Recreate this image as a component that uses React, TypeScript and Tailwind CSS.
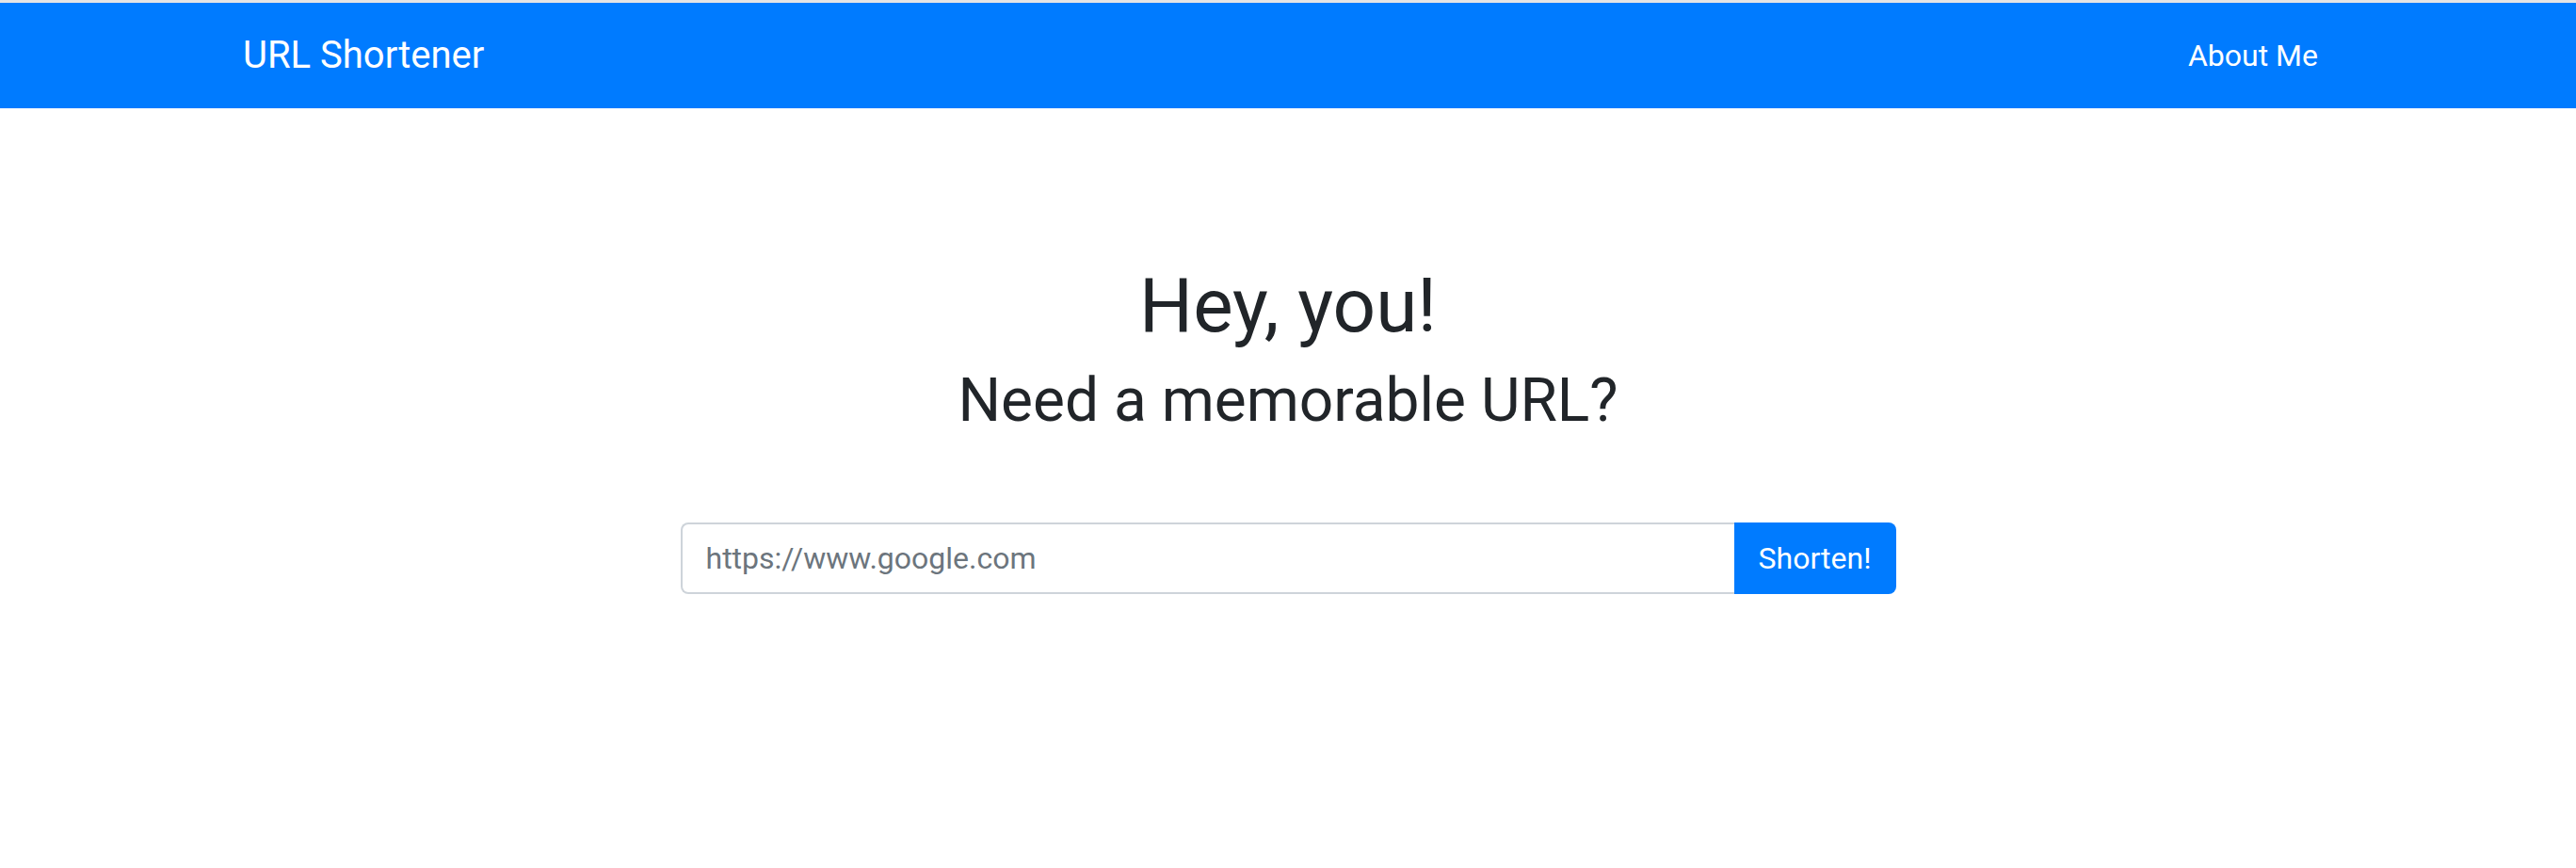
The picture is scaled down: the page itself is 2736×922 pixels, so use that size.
import React from "react";

export default function App() {
  return (
    <div className="min-h-[922px] bg-white" style={{ fontFamily: "Roboto, 'Liberation Sans', sans-serif" }}>
      <div className="h-[3px] bg-[#e4e4e4]" />
      <nav className="h-[112px] bg-[#007bff]">
        <div className="mx-auto flex h-full w-[2220px] items-center justify-between">
          <a className="text-[40px] leading-[60px] text-white">URL Shortener</a>
          <a className="px-4 text-[32px] leading-[48px] text-white">About Me</a>
        </div>
      </nav>
      <main className="flex flex-col items-center pt-[162px] text-[#212529]">
        <h1 className="text-[80px] leading-[96px] font-normal">Hey, you!</h1>
        <h2 className="mt-[14px] text-[64px] leading-[77px] font-normal">Need a memorable URL?</h2>
        <div className="mt-[91px] flex h-[76px] w-[1291px]">
          <input
            className="h-full flex-1 rounded-l-[8px] border-2 border-r-0 border-[#ced4da] bg-white pl-[25px] pr-[24px] text-[32px] text-[#495057] placeholder:text-[#6c757d] outline-none"
            placeholder="https://www.google.com"
          />
          <button className="h-full w-[172px] rounded-r-[8px] bg-[#007bff] text-[32px] text-white">Shorten!</button>
        </div>
      </main>
    </div>
  );
}
